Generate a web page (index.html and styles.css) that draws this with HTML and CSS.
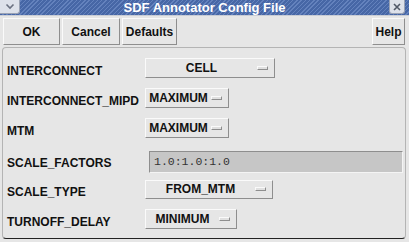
FILE: index.html
```html
<!DOCTYPE html>
<html lang="en">
<head>
  <meta charset="UTF-8">
  <meta name="viewport" content="width=device-width, initial-scale=1.0">
  <title>SDF Annotator Config File</title>
  <link rel="stylesheet" href="styles.css">
</head>
<body>
  <div class="window">
    <div class="titlebar">
      <span class="menu-btn">
        <svg width="10" height="7" viewBox="0 0 10 7"><path d="M1.5 1.5 L5 5 L8.5 1.5" fill="none" stroke="#6a7080" stroke-width="1.6"/></svg>
      </span>
      <span class="title">SDF Annotator Config File</span>
      <span class="close-btn">
        <svg width="8" height="8" viewBox="0 0 8 8"><path d="M1 1 L7 7 M7 1 L1 7" fill="none" stroke="#505868" stroke-width="1.6"/></svg>
      </span>
    </div>

    <div class="toolbar">
      <button class="btn btn-ok">OK</button>
      <button class="btn btn-cancel">Cancel</button>
      <button class="btn btn-defaults">Defaults</button>
      <span class="spacer"></span>
      <button class="btn btn-help">Help</button>
    </div>

    <div class="form">
      <div class="row row-1">
        <span class="label">INTERCONNECT</span>
        <div class="option opt-cell"><span class="opt-text">CELL</span><span class="indicator"></span></div>
      </div>
      <div class="row row-2">
        <span class="label">INTERCONNECT_MIPD</span>
        <div class="option opt-max"><span class="opt-text">MAXIMUM</span><span class="indicator"></span></div>
      </div>
      <div class="row row-3">
        <span class="label">MTM</span>
        <div class="option opt-max"><span class="opt-text">MAXIMUM</span><span class="indicator"></span></div>
      </div>
      <div class="row row-4">
        <span class="label label-field">SCALE_FACTORS</span>
        <div class="field">1.0:1.0:1.0</div>
      </div>
      <div class="row row-5">
        <span class="label">SCALE_TYPE</span>
        <div class="option opt-from"><span class="opt-text">FROM_MTM</span><span class="indicator"></span></div>
      </div>
      <div class="row row-6">
        <span class="label">TURNOFF_DELAY</span>
        <div class="option opt-min"><span class="opt-text">MINIMUM</span><span class="indicator"></span></div>
      </div>
    </div>
  </div>
</body>
</html>
```

FILE: styles.css
```css
body {
  margin: 0;
  font-family: "Liberation Sans", Arial, sans-serif;
  background-color: #e6e6e6;
  color: #111;
}
.window {
  width: 409px;
  height: 242px;
  overflow: hidden;
  background-color: #e6e6e6;
}
.titlebar {
  display: flex;
  height: 15px;
  background-color: #4767a6;
  background-image: repeating-linear-gradient(-45deg, #4767a6 0, #4767a6 2px, #6482bd 2px, #6482bd 3px);
  border-bottom: 1px solid #c8ccd4;
}
.menu-btn {
  width: 19px;
  height: 13px;
  display: flex;
  align-items: center;
  justify-content: center;
  background-color: #dde1ea;
  border-right: 1px solid #9aa2b4;
  border-bottom: 1px solid #9aa2b4;
  border-radius: 0 0 3px 0;
}
.title {
  flex: 1;
  text-align: center;
  color: #fff;
  font-weight: bold;
  font-size: 13px;
  line-height: 15px;
}
.close-btn {
  width: 14px;
  height: 13px;
  margin-right: 4px;
  display: flex;
  align-items: center;
  justify-content: center;
  background-color: #dde1ea;
  border: 1px solid #9aa2b4;
  border-top: none;
  border-radius: 0 0 3px 3px;
}
.toolbar {
  display: flex;
  gap: 2px;
  padding: 2px 4px 0 3px;
}
.spacer {
  flex: 1;
}
.btn {
  height: 27px;
  padding: 0;
  font-family: "Liberation Sans", Arial, sans-serif;
  font-weight: bold;
  font-size: 12px;
  color: #111;
  background-color: #e6e6e6;
  border: 1px solid;
  border-color: #fafafa #8e8e8e #8e8e8e #fafafa;
}
.btn-ok { width: 57px; }
.btn-cancel { width: 58px; }
.btn-defaults { width: 55px; }
.btn-help { width: 33px; }
.form {
  margin: 2px 3px 0 2px;
  height: 192px;
  padding: 10px 0 0 4px;
  box-sizing: border-box;
  border: 1px solid #b4b4b4;
  border-bottom-color: #222;
  border-radius: 4px;
}
.row {
  display: flex;
  align-items: center;
}
.row-2, .row-3, .row-6 { margin-top: 10px; }
.row-4 { margin-top: 13px; }
.row-5 { margin-top: 6px; }
.label {
  width: 138px;
  flex: none;
  font-weight: bold;
  font-size: 12px;
  padding-top: 6px;
}
.label-field {
  padding-top: 1px;
}
.option {
  display: flex;
  align-items: center;
  height: 20px;
  box-sizing: border-box;
  border: 1px solid;
  border-color: #fafafa #8e8e8e #8e8e8e #fafafa;
  background-color: #e6e6e6;
  font-weight: bold;
  font-size: 12px;
}
.row-5 .option { height: 19px; }
.opt-text {
  flex: 1;
  text-align: center;
  white-space: nowrap;
}
.indicator {
  width: 11px;
  height: 4px;
  margin-right: 6px;
  box-sizing: border-box;
  border: 1px solid;
  border-color: #fafafa #8e8e8e #8e8e8e #fafafa;
  background-color: #e0e0e0;
}
.opt-cell { width: 130px; }
.opt-max { width: 84px; }
.opt-from { width: 128px; }
.opt-min { width: 92px; }
.field {
  margin-left: 4px;
  width: 254px;
  height: 22px;
  box-sizing: border-box;
  padding: 2px 4px;
  background-color: #c6c6c6;
  border: 1px solid;
  border-color: #8e8e8e #f4f4f4 #f4f4f4 #8e8e8e;
  font-family: "Liberation Mono", "Courier New", monospace;
  font-size: 11.5px;
  line-height: 15px;
  color: #333;
}
```
